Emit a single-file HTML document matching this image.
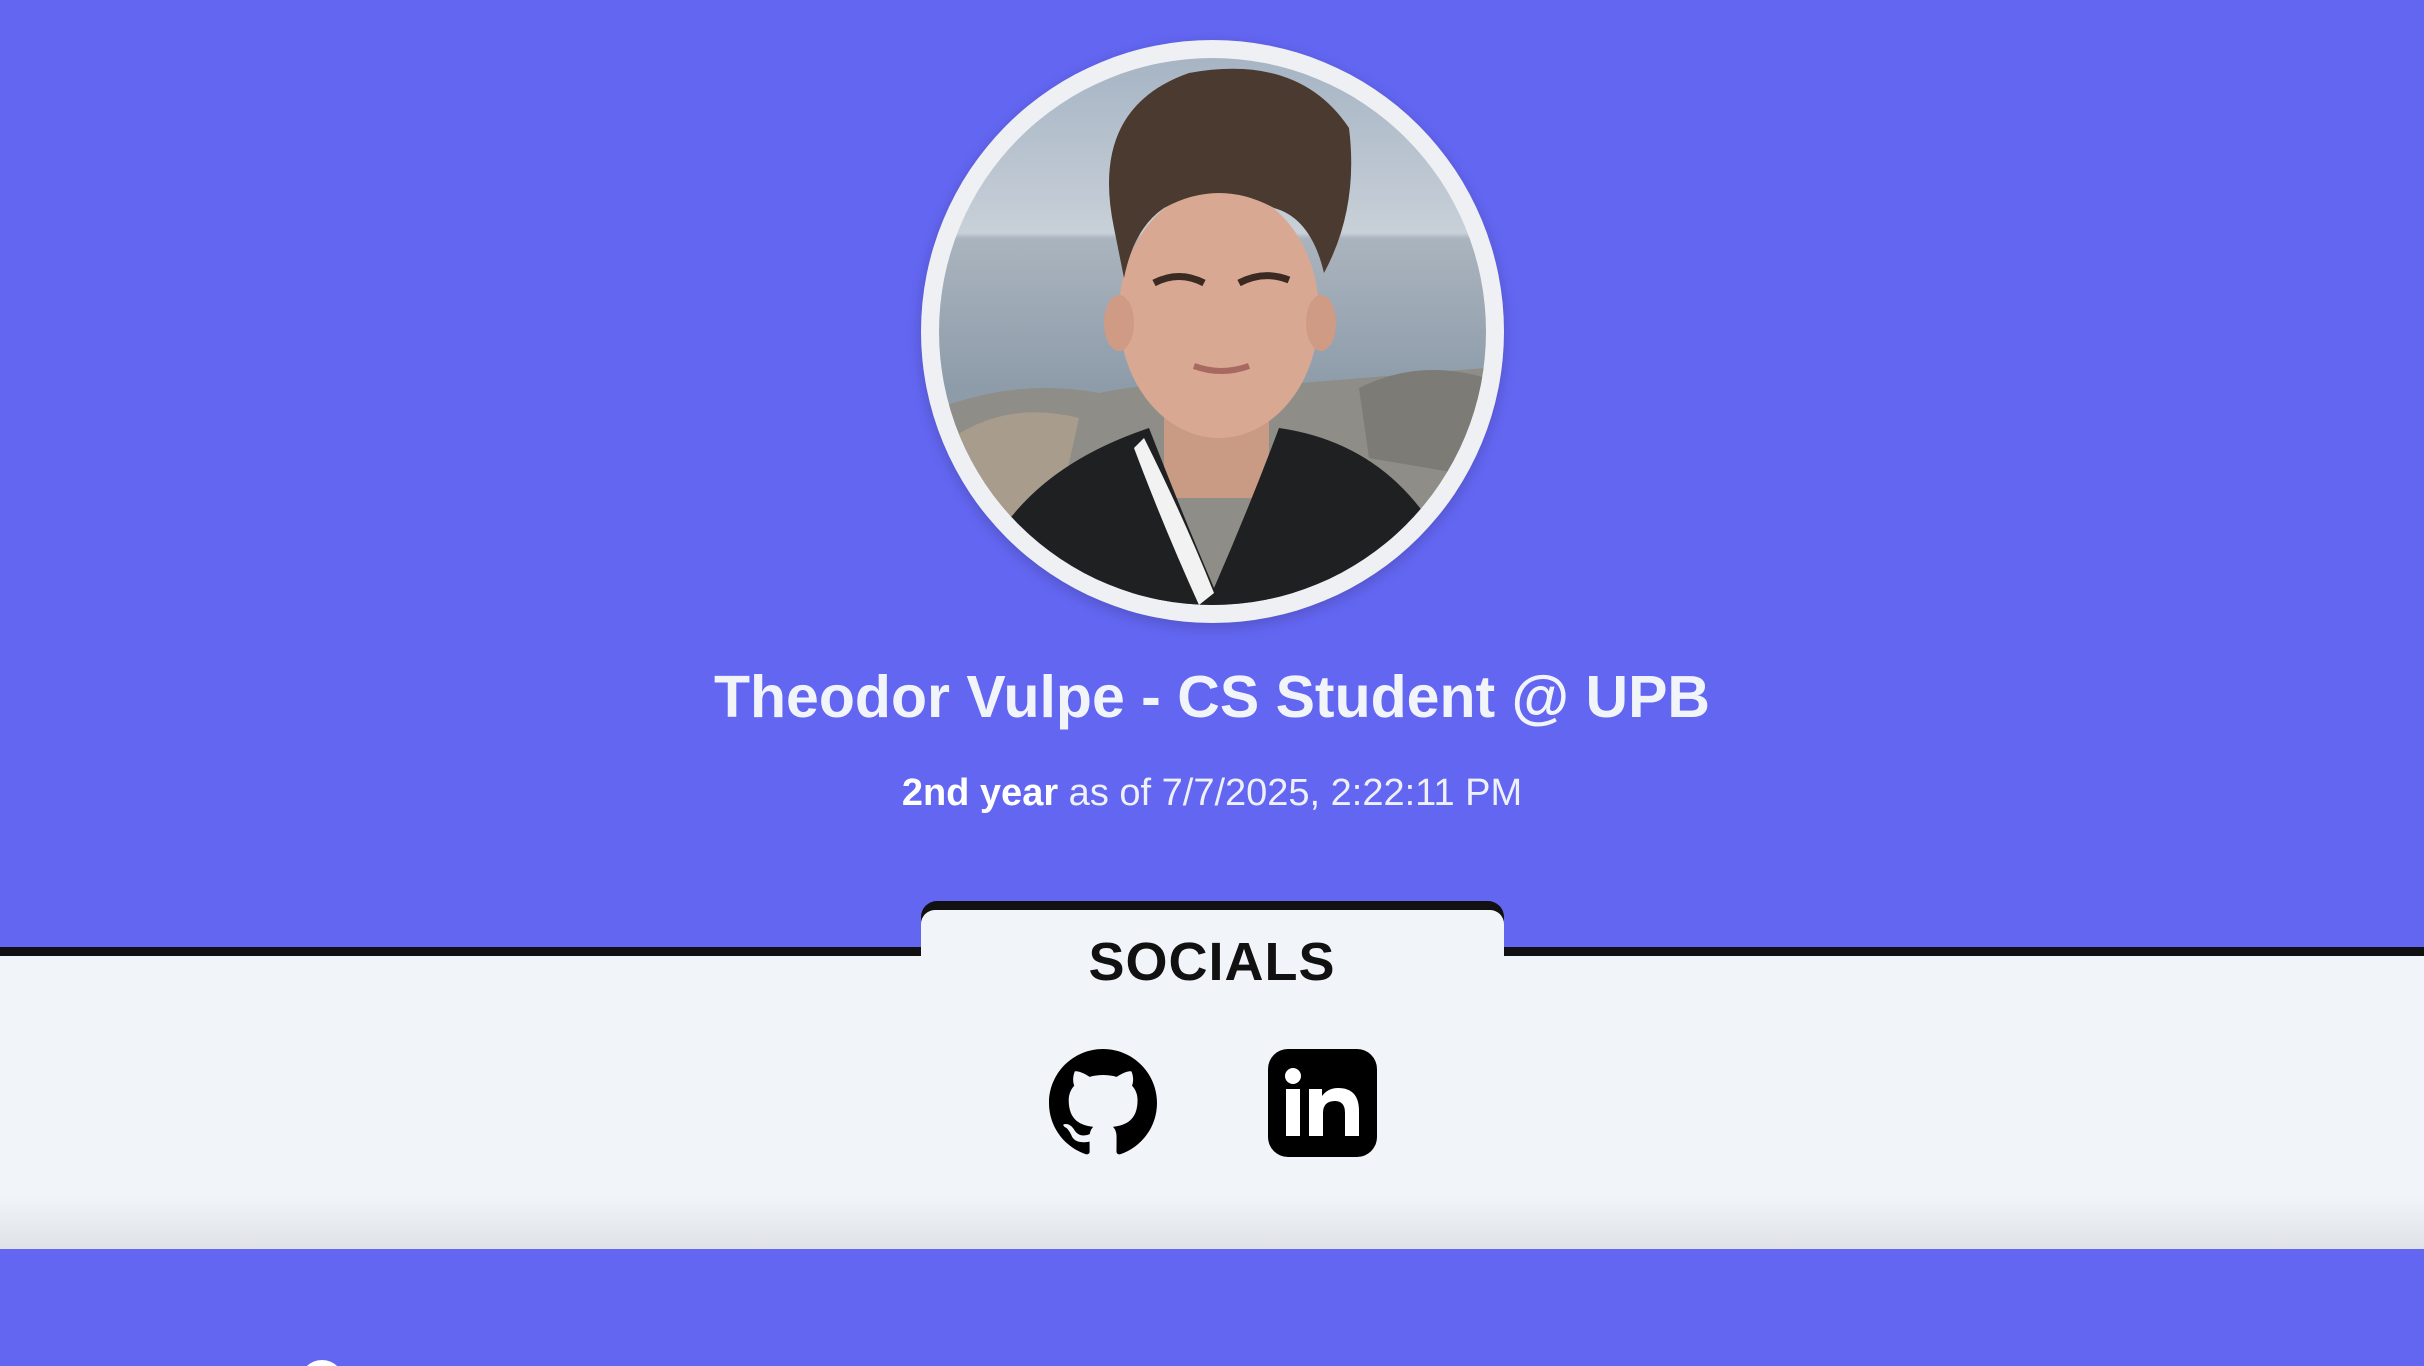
<!DOCTYPE html>
<html><head><meta charset="utf-8">
<style>
html,body{margin:0;padding:0;overflow:hidden;width:2424px;height:1366px;}
body{font-family:"Liberation Sans",sans-serif;}
.wrap{position:relative;width:2424px;height:1366px;overflow:hidden;background:#6366f1;}
.avatar{position:absolute;left:921px;top:40px;width:583px;height:583px;border-radius:50%;background:#eef0f4;box-shadow:0 4px 14px rgba(0,0,0,.18);}
.avatar svg{position:absolute;left:18px;top:18px;width:547px;height:547px;border-radius:50%;}
.title{position:absolute;left:0;width:2424px;top:660px;text-align:center;color:#f1f5f9;font-weight:bold;font-size:59px;line-height:74px;}
.sub{position:absolute;left:0;width:2424px;top:770px;text-align:center;color:#eef0fb;font-size:38px;line-height:46px;}
.sub b{font-weight:bold;color:#fff;}
.line{position:absolute;left:0;top:947px;width:2424px;height:9px;background:#111;}
.light{position:absolute;left:0;top:956px;width:2424px;height:293px;background:linear-gradient(to bottom,#f1f4f8 0,#f1f4f8 240px,#dfe2e6 293px);}
.tab{position:absolute;left:921px;top:901px;width:583px;height:70px;background:#111;border-radius:16px 16px 0 0;}
.tabin{position:absolute;left:921px;top:910px;width:583px;height:70px;background:#f1f4f8;border-radius:14px 14px 0 0;}
.soc{position:absolute;left:0;width:2424px;top:930px;text-align:center;font-weight:bold;font-size:54px;line-height:64px;color:#111;letter-spacing:1px;}
.gh{position:absolute;left:1049px;top:1049px;width:108px;height:108px;}
.li{position:absolute;left:1268px;top:1049px;width:109px;height:108px;}
.dot{position:absolute;left:300px;top:1360px;width:44px;height:44px;border-radius:50%;background:#fff;}
</style></head><body><div class="wrap">
<div class="avatar">
<svg viewBox="0 0 547 547" xmlns="http://www.w3.org/2000/svg">
<defs>
<linearGradient id="sky" x1="0" y1="0" x2="0" y2="1">
<stop offset="0" stop-color="#a6b4c4"/><stop offset="0.32" stop-color="#c8d0d8"/>
<stop offset="0.33" stop-color="#aab4be"/><stop offset="0.6" stop-color="#8e9caa"/></linearGradient>
</defs>
<rect width="547" height="547" fill="url(#sky)"/>
<path d="M0 350 Q80 320 160 335 Q230 320 300 330 L547 310 L547 547 L0 547Z" fill="#8f8d87"/>
<path d="M0 390 Q60 340 140 360 L120 450 L0 470Z" fill="#a89c8c"/>
<path d="M420 330 Q480 300 547 320 L547 420 L430 400Z" fill="#7d7b76"/>
<rect x="225" y="320" width="105" height="120" fill="#c99a84"/>
<path d="M30 547 Q60 420 210 370 Q245 460 275 530 Q310 450 340 370 Q480 390 530 547Z" fill="#1f2022"/>
<path d="M205 380 Q245 460 275 535 L260 547 Q225 470 195 390Z" fill="#f2f2f2"/>
<ellipse cx="280" cy="255" rx="100" ry="125" fill="#d9a892"/>
<ellipse cx="180" cy="265" rx="15" ry="28" fill="#cf9b85"/>
<ellipse cx="382" cy="265" rx="15" ry="28" fill="#cf9b85"/>
<path d="M175 170 Q150 50 250 15 Q360 -5 410 70 Q420 150 385 215 Q372 160 335 150 Q280 120 225 150 Q195 170 185 220Z" fill="#4a3a2f"/>
<path d="M215 225 Q240 212 265 225" stroke="#3a2a22" stroke-width="7" fill="none"/>
<path d="M300 225 Q325 212 350 222" stroke="#3a2a22" stroke-width="7" fill="none"/>
<path d="M255 308 Q282 318 310 308" stroke="#a86a60" stroke-width="6" fill="none"/>
</svg>
</div>
<div class="title">Theodor Vulpe - CS Student @ UPB</div>
<div class="sub"><b>2nd year</b> as of 7/7/2025, 2:22:11 PM</div>
<div class="line"></div>
<div class="light"></div>
<div class="tab"></div>
<div class="tabin"></div>
<div class="soc">SOCIALS</div>
<svg class="gh" viewBox="0 0 16 16" xmlns="http://www.w3.org/2000/svg"><path fill="#000" d="M8 0C3.58 0 0 3.58 0 8c0 3.54 2.29 6.53 5.47 7.59.4.07.55-.17.55-.38 0-.19-.01-.82-.01-1.49-2.01.37-2.53-.49-2.69-.94-.09-.23-.48-.94-.82-1.13-.28-.15-.68-.52-.01-.53.63-.01 1.08.58 1.23.82.72 1.21 1.87.87 2.33.66.07-.52.28-.87.51-1.07-1.78-.2-3.64-.89-3.64-3.95 0-.87.31-1.59.82-2.15-.08-.2-.36-1.02.08-2.12 0 0 .67-.21 2.2.82.64-.18 1.32-.27 2-.27.68 0 1.36.09 2 .27 1.53-1.04 2.2-.82 2.2-.82.44 1.1.16 1.92.08 2.12.51.56.82 1.27.82 2.15 0 3.07-1.87 3.75-3.65 3.95.29.25.54.73.54 1.48 0 1.07-.01 1.93-.01 2.2 0 .21.15.46.55.38A8.013 8.013 0 0016 8c0-4.42-3.58-8-8-8z"/></svg>
<svg class="li" viewBox="0 0 109 108" xmlns="http://www.w3.org/2000/svg">
<rect x="0" y="0" width="109" height="108" rx="20" fill="#000"/>
<circle cx="25" cy="27" r="8" fill="#fff"/>
<rect x="18" y="40" width="14" height="47" fill="#fff"/>
<path d="M41 40 H54 V47 Q60 39 70 39 Q91 39 91 62 V87 H77 V64 Q77 52 67 52 Q55 52 55 64 V87 H41Z" fill="#fff"/>
</svg>
<div class="dot"></div>
</div></body></html>
